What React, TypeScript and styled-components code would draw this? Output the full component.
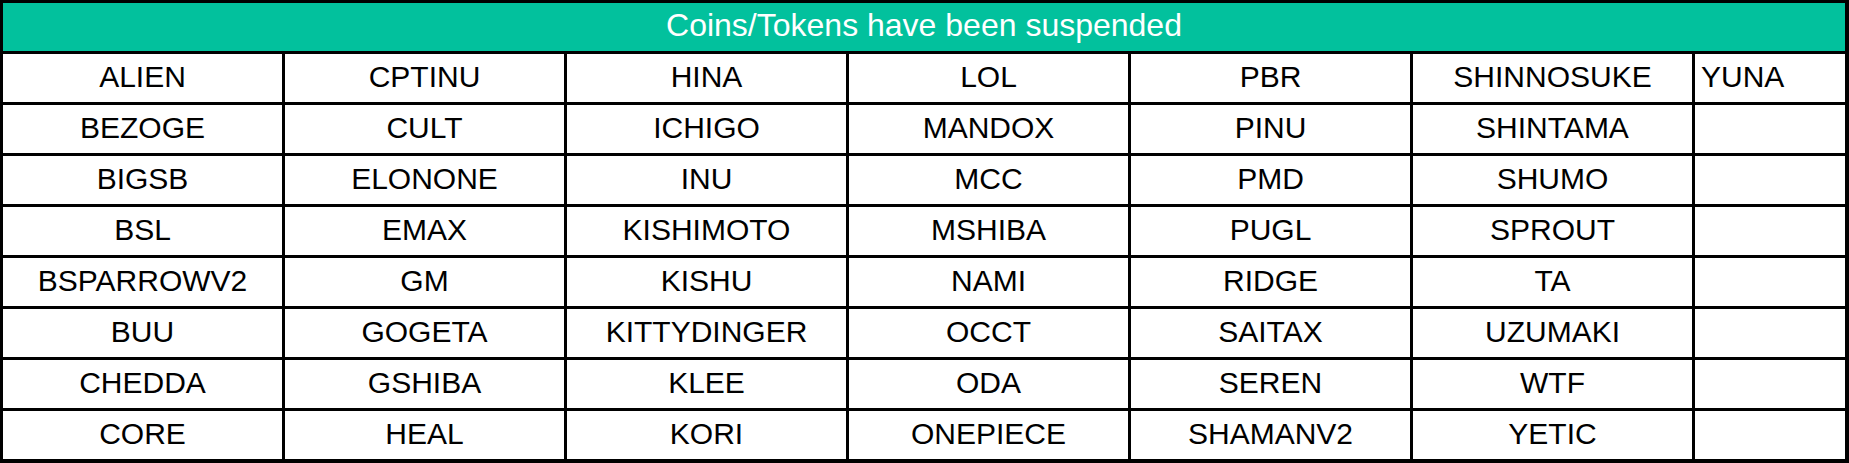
import React from 'react';
import styled, { createGlobalStyle } from 'styled-components';

const GlobalStyle = createGlobalStyle`
  html, body {
    margin: 0;
    padding: 0;
    background: #ffffff;
  }
`;

const columns: string[][] = [
  ['ALIEN', 'BEZOGE', 'BIGSB', 'BSL', 'BSPARROWV2', 'BUU', 'CHEDDA', 'CORE'],
  ['CPTINU', 'CULT', 'ELONONE', 'EMAX', 'GM', 'GOGETA', 'GSHIBA', 'HEAL'],
  ['HINA', 'ICHIGO', 'INU', 'KISHIMOTO', 'KISHU', 'KITTYDINGER', 'KLEE', 'KORI'],
  ['LOL', 'MANDOX', 'MCC', 'MSHIBA', 'NAMI', 'OCCT', 'ODA', 'ONEPIECE'],
  ['PBR', 'PINU', 'PMD', 'PUGL', 'RIDGE', 'SAITAX', 'SEREN', 'SHAMANV2'],
  ['SHINNOSUKE', 'SHINTAMA', 'SHUMO', 'SPROUT', 'TA', 'UZUMAKI', 'WTF', 'YETIC'],
  ['YUNA'],
];

const ROWS = 8;

const Table = styled.div`
  display: grid;
  grid-template-columns: repeat(6, 279px) 150px;
  grid-auto-rows: 48px;
  gap: 3px;
  width: 1849px;
  box-sizing: border-box;
  padding: 3px 4px 4px 3px;
  background: #000000;
  font-family: 'Liberation Sans', Arial, sans-serif;
`;

const Header = styled.div`
  grid-column: 1 / -1;
  display: flex;
  align-items: center;
  justify-content: center;
  padding-bottom: 3px;
  background: #02c19d;
  color: #ffffff;
  font-size: 32px;
`;

const Cell = styled.div<{ $left?: boolean }>`
  display: flex;
  align-items: center;
  justify-content: ${(p) => (p.$left ? 'flex-start' : 'center')};
  padding: 0 0 2px ${(p) => (p.$left ? '6px' : '0')};
  background: #ffffff;
  color: #000000;
  font-size: 30px;
  white-space: nowrap;
`;

const App: React.FC = () => {
  const rows = Array.from({ length: ROWS }, (_, r) =>
    columns.map((col) => col[r] ?? '')
  );

  return (
    <>
      <GlobalStyle />
      <Table>
        <Header>Coins/Tokens have been suspended</Header>
        {rows.map((row, r) =>
          row.map((name, c) => (
            <Cell key={`${r}-${c}`} $left={c === columns.length - 1}>
              {name}
            </Cell>
          ))
        )}
      </Table>
    </>
  );
};

export default App;
